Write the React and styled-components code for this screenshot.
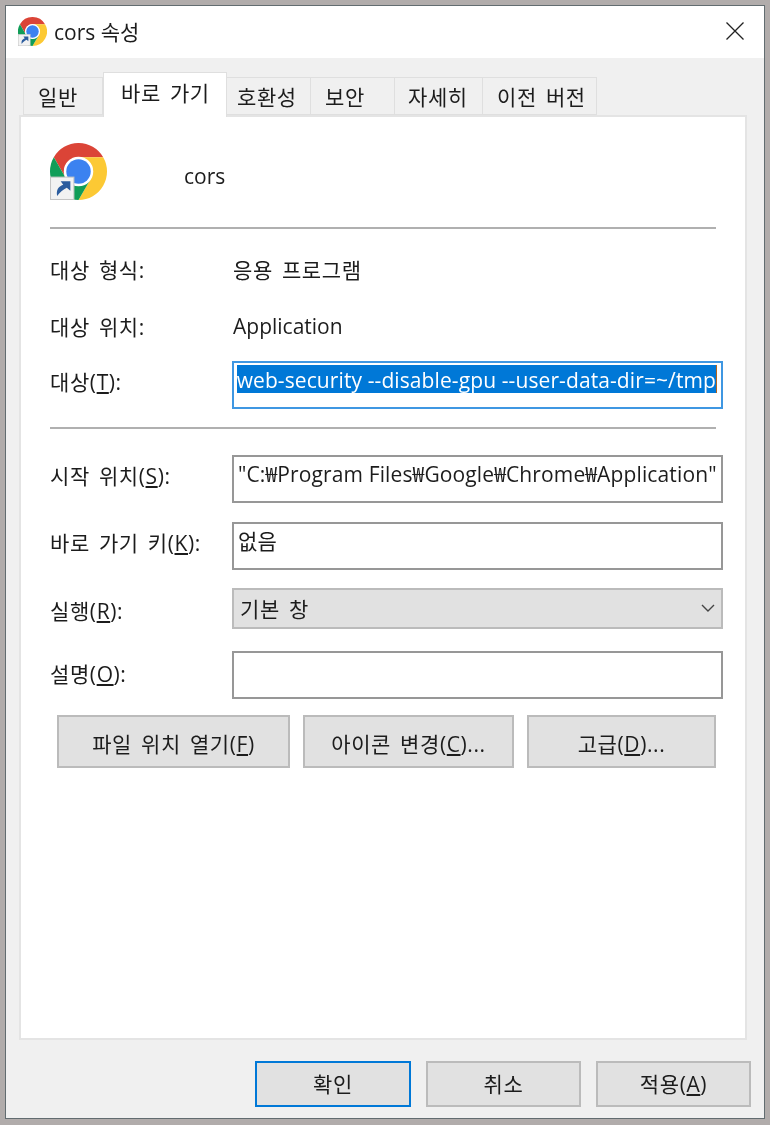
import React from 'react';
import styled, { createGlobalStyle, css } from 'styled-components';

const GlobalStyle = createGlobalStyle`
  html, body {
    margin: 0;
    background: #b1acab;
  }
  * {
    box-sizing: border-box;
  }
`;

// hangul runs narrower than the original font, so open it up a bit
const hangul = css`
  letter-spacing: 0.6px;
  word-spacing: 3px;
`;

const Page = styled.div`
  width: 770px;
  height: 1125px;
  padding: 5px 5px 6px;
  background: #b1acab;
  overflow: hidden;
  font-family: "Open Sans", "Noto Sans CJK KR", sans-serif;
  font-size: 21px;
  color: #1c1c1c;
`;

const Window = styled.div`
  height: 100%;
  display: flex;
  flex-direction: column;
  border: 1.5px solid #626c70;
  background: #f0f0f0;
  filter: blur(0.6px);
`;

const TitleBar = styled.div`
  height: 52px;
  flex: none;
  display: flex;
  align-items: center;
  padding: 0 20px 2px 12px;
  background: #fff;
`;

const TitleText = styled.span`
  margin-left: 7px;
  flex: 1;
`;

const Body = styled.div`
  flex: 1;
  display: flex;
  flex-direction: column;
  padding: 14px 17px 11px 13px;
`;

const TabStrip = styled.div`
  display: flex;
  align-items: flex-end;
  height: 43px;
  flex: none;
  padding-left: 4px;
`;

const Tab = styled.div`
  position: relative;
  width: ${(p) => p.$width}px;
  height: ${(p) => (p.$active ? 45 : 38)}px;
  margin-bottom: ${(p) => (p.$active ? -2 : 0)}px;
  z-index: ${(p) => (p.$active ? 1 : 0)};
  display: flex;
  align-items: center;
  padding-left: ${(p) => p.$pad}px;
  padding-bottom: ${(p) => (p.$active ? 6 : 0)}px;
  background: ${(p) => (p.$active ? '#fff' : '#f0f0f0')};
  border: 1.5px solid #dfdfdf;
  border-bottom: ${(p) => (p.$active ? 'none' : '1.5px solid #dfdfdf')};
  border-left: ${(p) => (p.$active || p.$first ? '1.5px solid #dfdfdf' : 'none')};
  white-space: nowrap;
  ${hangul}
`;

const Panel = styled.div`
  flex: none;
  height: 925px;
  display: flex;
  flex-direction: column;
  padding: 26px 22px 0 29px;
  background: #fff;
  border: 2px solid #e4e4e4;
`;

const Header = styled.div`
  display: flex;
  align-items: center;
  height: 57px;
  flex: none;
`;

const HeaderName = styled.span`
  margin-left: 77px;
  padding-top: 8px;
`;

const Divider = styled.div`
  flex: none;
  height: 2px;
  margin-top: ${(p) => p.$top}px;
  margin-right: 7px;
  background: #b0b0b0;
`;

const Row = styled.div`
  flex: none;
  display: flex;
  align-items: center;
  height: ${(p) => p.$height}px;
  margin-top: ${(p) => p.$top}px;
`;

const Label = styled.div`
  width: 182px;
  flex: none;
  padding-bottom: ${(p) => p.$up || 0}px;
  padding-top: ${(p) => p.$down || 0}px;
  white-space: nowrap;
  ${hangul}
`;

const Value = styled.div`
  margin-left: 1px;
  padding-bottom: 2px;
  ${(p) => p.$hangul && hangul}
`;

const Field = styled.div`
  flex: 1;
  height: 100%;
  min-width: 0;
  padding: 1px 2px 0 4px;
  background: #fff;
  border: 2px solid #979797;
  white-space: nowrap;
  overflow: hidden;
  letter-spacing: 0.13px;
`;

const TargetField = styled(Field)`
  padding: 2px 4px 0 3px;
  border-color: #3f97e2;
  letter-spacing: 0.1px;
`;

const Selection = styled.div`
  display: flex;
  justify-content: flex-end;
  height: 28px;
  line-height: 30px;
  background: #0078d7;
  color: #fff;
  overflow: hidden;
  border-right: 1px solid #b5651d;

  span {
    flex: none;
  }
`;

const Select = styled.div`
  flex: 1;
  height: 100%;
  display: flex;
  align-items: center;
  justify-content: space-between;
  padding: 0 6px 2px 6px;
  background: #e1e1e1;
  border: 2px solid #bbb;
  ${hangul}
`;

const ButtonRow = styled.div`
  flex: none;
  display: flex;
  gap: 13px;
  margin: 16px 0 0 7px;
`;

const Button = styled.button`
  width: ${(p) => p.$width}px;
  height: ${(p) => p.$height}px;
  padding: 2px 0 0;
  font: inherit;
  color: inherit;
  background: #e1e1e1;
  border: 2px solid #bbb;
  white-space: nowrap;
  ${hangul}
`;

const Footer = styled.div`
  flex: 1;
  display: flex;
  justify-content: flex-end;
  align-items: flex-end;
  gap: 15px;
  margin-right: -4px;
`;

const FooterButton = styled(Button)`
  padding: 0 0 2px;
  border-color: ${(p) => (p.$primary ? '#0078d7' : '#bbb')};
`;

const ChromeIcon = ({ size }) => (
  <svg width={size} height={size} viewBox="0 0 56 56">
    <path d="M3.75 14A28 28 0 0 1 52.25 14H28A14 14 0 0 0 15.9 35Z" fill="#db4437" />
    <path d="M52.25 14A28 28 0 0 1 28 56L40.1 35A14 14 0 0 0 28 14Z" fill="#fcc934" />
    <path d="M28 56A28 28 0 0 1 3.75 14L15.9 35A14 14 0 0 0 40.1 35Z" fill="#109d58" />
    <circle cx="28" cy="28" r="14.5" fill="#fff" />
    <circle cx="28" cy="28" r="12" fill="#3b82f0" />
    <rect x="0.5" y="33.500" width="23" height="22" fill="#f2f2f2" stroke="#c4c4c4" />
    <path d="M7 52C6 46 8 43 13 41L10.500 37.500H20V47L16.500 44C13 46 10 48 7 52Z" fill="#2b5c9e" />
  </svg>
);

const CloseIcon = () => (
  <svg width="18" height="18" viewBox="0 0 18 18">
    <path d="M0.5 0.5L17.500 17.500M17.500 0.500L0.500 17.500" stroke="#222" strokeWidth="1.3" fill="none" />
  </svg>
);

const ChevronIcon = () => (
  <svg width="14" height="8" viewBox="0 0 14 8">
    <path d="M1 1L7 7 13 1" stroke="#444" strokeWidth="1.4" fill="none" />
  </svg>
);

const tabs = [
  { name: '일반', width: 80, pad: 14, first: true },
  { name: '바로 가기', width: 124, pad: 17, active: true },
  { name: '호환성', width: 84, pad: 10 },
  { name: '보안', width: 84, pad: 14 },
  { name: '자세히', width: 88, pad: 13 },
  { name: '이전 버전', width: 114, pad: 14 },
];

const App = () => (
  <Page>
    <GlobalStyle />
    <Window>
      <TitleBar>
        <ChromeIcon size={29} />
        <TitleText>cors 속성</TitleText>
        <CloseIcon />
      </TitleBar>
      <Body>
        <TabStrip>
          {tabs.map((t) => (
            <Tab key={t.name} $width={t.width} $pad={t.pad} $active={t.active} $first={t.first}>
              {t.name}
            </Tab>
          ))}
        </TabStrip>
        <Panel>
          <Header>
            <ChromeIcon size={57} />
            <HeaderName>cors</HeaderName>
          </Header>
          <Divider $top={27} />
          <Row $height={40} $top={21}>
            <Label $up={2}>대상 형식:</Label>
            <Value $hangul>응용 프로그램</Value>
          </Row>
          <Row $height={40} $top={17}>
            <Label $up={2}>대상 위치:</Label>
            <Value>Application</Value>
          </Row>
          <Row $height={48} $top={14}>
            <Label $up={8}>대상(<u>T</u>):</Label>
            <TargetField>
              <Selection>
                <span>web-security --disable-gpu --user-data-dir=~/tmp</span>
              </Selection>
            </TargetField>
          </Row>
          <Divider $top={18} />
          <Row $height={48} $top={26}>
            <Label $up={8}>시작 위치(<u>S</u>):</Label>
            <Field>"C:₩Program Files₩Google₩Chrome₩Application"</Field>
          </Row>
          <Row $height={48} $top={19}>
            <Label $up={8}>바로 가기 키(<u>K</u>):</Label>
            <Field>없음</Field>
          </Row>
          <Row $height={41} $top={18}>
            <Label $down={2}>실행(<u>R</u>):</Label>
            <Select>
              <span>기본 창</span>
              <ChevronIcon />
            </Select>
          </Row>
          <Row $height={48} $top={22}>
            <Label $up={4}>설명(<u>O</u>):</Label>
            <Field />
          </Row>
          <ButtonRow>
            <Button $width={233} $height={53}>파일 위치 열기(<u>F</u>)</Button>
            <Button $width={211} $height={53}>아이콘 변경(<u>C</u>)...</Button>
            <Button $width={189} $height={53}>고급(<u>D</u>)...</Button>
          </ButtonRow>
        </Panel>
        <Footer>
          <FooterButton $width={156} $height={46} $primary>확인</FooterButton>
          <FooterButton $width={155} $height={46}>취소</FooterButton>
          <FooterButton $width={155} $height={46}>적용(<u>A</u>)</FooterButton>
        </Footer>
      </Body>
    </Window>
  </Page>
);

export default App;
